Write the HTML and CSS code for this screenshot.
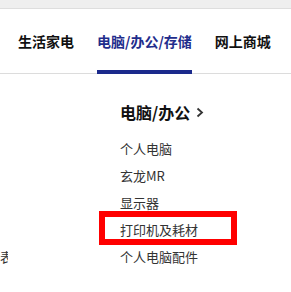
FILE: index.html
```html
<!DOCTYPE html>
<html lang="zh-CN">
<head>
<meta charset="utf-8">
<link rel="stylesheet" href="styles.css">
</head>
<body>
<div class="topband"></div>
<nav class="nav">
  <a class="nav-item">生活家电</a>
  <a class="nav-item active">电脑/办公/存储</a>
  <a class="nav-item">网上商城</a>
</nav>
<main class="menu">
  <div class="side"><span class="side-item">智能手表</span></div>
  <section class="col">
    <h2 class="col-title">电脑/办公
      <svg class="chev" width="8" height="11" viewBox="0 0 8 11"><path d="M1.5 1.5 L6 5.5 L1.5 9.5" fill="none" stroke="#333" stroke-width="1.8"/></svg>
    </h2>
    <ul class="list">
      <li>个人电脑</li>
      <li>玄龙MR</li>
      <li>显示器</li>
      <li class="marked">打印机及耗材</li>
      <li>个人电脑配件</li>
    </ul>
  </section>
</main>
</body>
</html>
```
FILE: styles.css
```css
*, *::before, *::after { box-sizing: border-box; }
html, body { margin: 0; padding: 0; background: #fff; }
body {
  font-family: "Noto Sans CJK SC", "Noto Sans", sans-serif;
  color: #222;
  width: 291px;
  height: 292px;
  overflow: hidden;
}
.topband {
  height: 9px;
  background: #efefef;
  border-bottom: 1px solid #dedede;
}
.nav {
  display: flex;
  gap: 23px;
  height: 65px;
  padding-left: 18px;
  border-bottom: 1px solid #dcdcdc;
}
.nav-item {
  display: flex;
  align-items: center;
  font-size: 14px;
  font-weight: 700;
  color: #111;
  margin-bottom: -1px;
  border-bottom: 4px solid transparent;
  padding-top: 2px;
  white-space: nowrap;
}
.nav-item.active {
  color: #1f2d8c;
  border-bottom-color: #1b2a8c;
}
.menu {
  display: flex;
  padding-top: 26px;
}
.side {
  width: 8px;
  overflow: hidden;
  display: flex;
  justify-content: flex-end;
  align-items: flex-end;
  margin-right: 112px;
}
.side-item {
  font-size: 13px;
  line-height: 27px;
  color: #333;
  white-space: nowrap;
  flex-shrink: 0;
  margin-right: -5px;
}
.col { display: flex; flex-direction: column; }
.col-title {
  margin: 0 0 11px;
  font-size: 16px;
  line-height: 24px;
  font-weight: 700;
  color: #111;
  display: flex;
  align-items: center;
  gap: 6px;
}
.chev { margin-top: 1px; }
.list {
  list-style: none;
  margin: 0;
  padding: 0;
}
.list li {
  font-size: 13px;
  line-height: 27px;
  color: #333;
  white-space: nowrap;
}
.list li.marked { position: relative; }
.list li.marked::after {
  content: "";
  position: absolute;
  left: -21px;
  top: -5px;
  width: 138px;
  height: 34px;
  border: 6px solid #f00;
}
```
